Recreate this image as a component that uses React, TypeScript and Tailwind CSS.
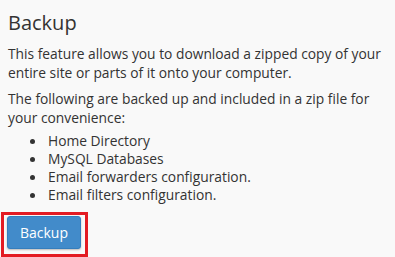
import React from 'react';

const items = [
  'Home Directory',
  'MySQL Databases',
  'Email forwarders configuration.',
  'Email filters configuration.',
];

const App = () => {
  return (
    <div className="w-[395px] h-[257px] overflow-hidden bg-[#f9f9f9] text-[#333] font-['Open_Sans',sans-serif]">
      <div className="px-2 pt-[9px]">
        <h1 className="text-[20px] leading-[28px] font-normal text-[#333] mb-[7px]">Backup</h1>
        <p className="text-[13.8px] leading-[19px] mb-[7px]">
          This feature allows you to download a zipped copy of your entire site or parts of it onto your computer.
        </p>
        <p className="text-[13.8px] leading-[19px] mb-[5px]">
          The following are backed up and included in a zip file for your convenience:
        </p>
        <ul className="pl-[22px] text-[13.8px] leading-[18px]">
          {items.map((it) => (
            <li key={it} className="flex items-center">
              <span className="w-[5px] h-[5px] rounded-full bg-[#333] mr-[13px]" />
              {it}
            </li>
          ))}
        </ul>
      </div>
      <div className="mt-[8px] ml-[1px] w-[87px] h-[45px] border-[3px] border-[#e31b23] pl-[3px] pt-[1px]">
        <button className="w-[74px] h-[33px] rounded-[3px] bg-[#428bca] border border-[#357ebd] text-white text-[14px] shadow-[0_1px_2px_rgba(0,0,0,0.25)]">
          Backup
        </button>
      </div>
    </div>
  );
};

export default App;
